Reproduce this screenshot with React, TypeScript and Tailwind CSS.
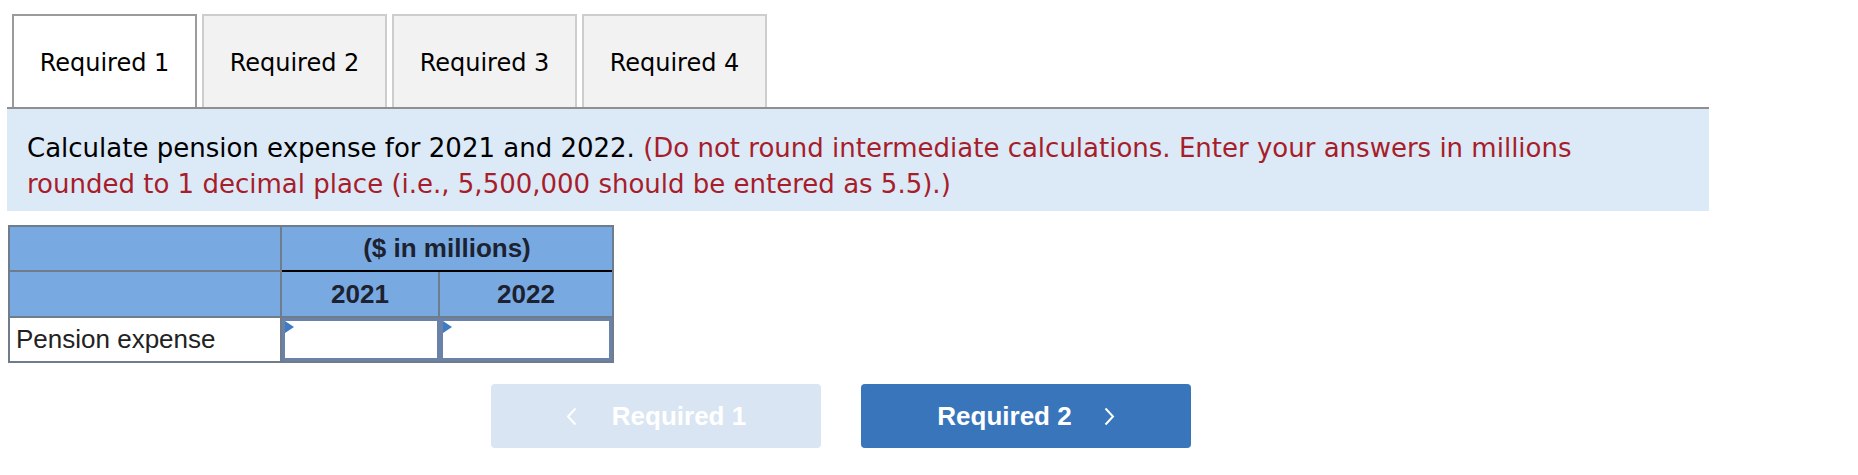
import React from 'react';

const tabs = ['Required 1', 'Required 2', 'Required 3', 'Required 4'];

const Chevron = ({ dir }: { dir: 'left' | 'right' }) => (
  <svg width="11" height="19" viewBox="0 0 11 19" fill="none" stroke="currentColor" strokeWidth="2">
    {dir === 'left' ? <path d="M9.5 1.5 L2 9.5 L9.5 17.5" /> : <path d="M1.5 1.5 L9 9.5 L1.5 17.5" />}
  </svg>
);

const InputCell: React.FC = () => (
  <div className="relative bg-white border-[3px] border-[#6a82a8]">
    {/* marker triangle */}
    <svg className="absolute left-0 top-0" width="9" height="12" viewBox="0 0 9 12">
      <path d="M0 0 L9 6 L0 12 Z" fill="#3d7cc2" />
    </svg>
  </div>
);

const App: React.FC = () => {
  return (
    <div className="min-h-[475px] bg-white pl-[7px] font-['DejaVu_Sans',sans-serif]">
      {/* Tabs */}
      <div className="w-[1702px] flex gap-[5px] pl-[5px] pt-[14px] border-b-2 border-[#8f8f8f]">
        {tabs.map((t, i) => (
          <div
            key={t}
            className={`w-[185px] h-[93px] flex items-center justify-center pt-[3px] border-2 border-b-0 text-[24px] text-black ${
              i === 0 ? 'bg-white border-[#9b9b9b]' : 'bg-[#f2f2f2] border-[#cdcdcd]'
            }`}
          >
            {t}
          </div>
        ))}
      </div>

      {/* Instructions */}
      <div className="w-[1702px] bg-[#dce9f7] pl-[20px] pt-[21px] pb-[9px] text-[26px] leading-[36px]">
        <div>
          <span className="text-black">Calculate pension expense for 2021 and 2022. </span>
          <span className="text-[#a71d2a]">(Do not round intermediate calculations. Enter your answers in millions</span>
        </div>
        <div className="text-[#a71d2a]">rounded to 1 decimal place (i.e., 5,500,000 should be entered as 5.5).)</div>
      </div>

      {/* Table */}
      <div className="ml-px mt-[14px] w-[606px] grid grid-cols-[272px_158px_172px] grid-rows-[45px_46px_43px] border-2 border-[#6e7c8c] font-['Liberation_Sans',Arial,sans-serif] text-[26px] text-[#1d2230]">
        <div className="bg-[#78a9e1] border-r-2 border-b-2 border-[#6e7c8c]" />
        <div className="col-span-2 bg-[#78a9e1] border-b-2 border-black flex items-center justify-center font-bold">
          ($ in millions)
        </div>
        <div className="bg-[#78a9e1] border-r-2 border-b-2 border-[#6e7c8c]" />
        <div className="bg-[#78a9e1] border-r-2 border-b-2 border-[#6e7c8c] flex items-center justify-center font-bold">
          2021
        </div>
        <div className="bg-[#78a9e1] border-b-2 border-[#6e7c8c] flex items-center justify-center font-bold">
          2022
        </div>
        <div className="bg-white border-r-2 border-[#6e7c8c] flex items-center pl-[6px] text-[#222]">
          Pension expense
        </div>
        <InputCell />
        <InputCell />
      </div>

      {/* Navigation buttons */}
      <div className="ml-[484px] mt-[21px] flex gap-[40px] font-['Liberation_Sans',Arial,sans-serif] text-[26px] font-bold text-white">
        <button className="w-[330px] h-[64px] rounded bg-[#d9e5f2] flex items-center justify-center gap-[35px]">
          <Chevron dir="left" />
          <span>Required 1</span>
        </button>
        <button className="w-[330px] h-[64px] rounded bg-[#3975bb] flex items-center justify-center gap-[32px]">
          <span>Required 2</span>
          <Chevron dir="right" />
        </button>
      </div>
    </div>
  );
};

export default App;
